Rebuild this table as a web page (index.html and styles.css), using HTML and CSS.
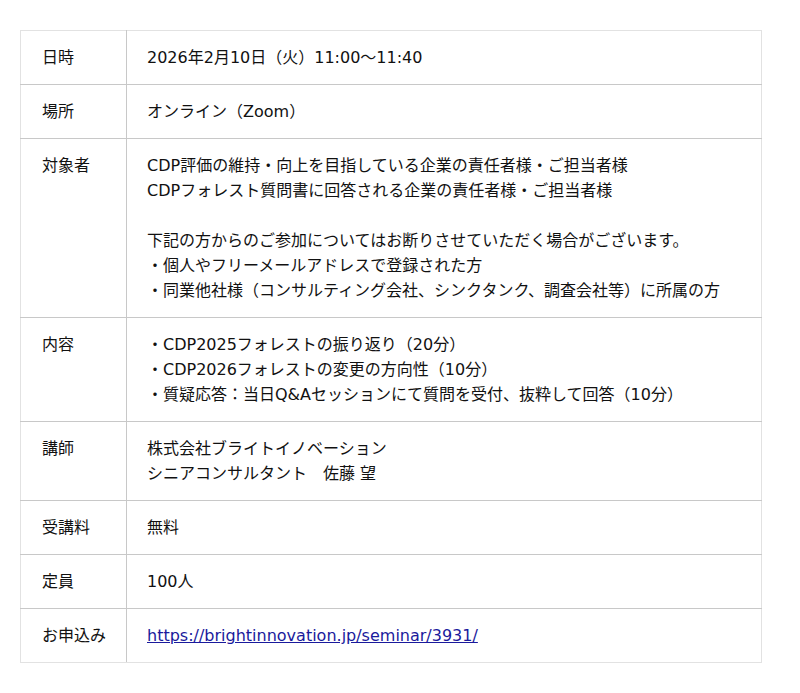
FILE: index.html
```html
<!DOCTYPE html>
<html lang="ja">
<head>
<meta charset="utf-8">
<link rel="stylesheet" href="styles.css">
</head>
<body>
<table class="info">
  <tr><th>日時</th><td>2026年2月10日（火）11:00〜11:40</td></tr>
  <tr><th>場所</th><td>オンライン（Zoom）</td></tr>
  <tr><th>対象者</th><td>CDP評価の維持・向上を目指している企業の責任者様・ご担当者様<br>CDPフォレスト質問書に回答される企業の責任者様・ご担当者様<br><br>下記の方からのご参加についてはお断りさせていただく場合がございます。<br>・個人やフリーメールアドレスで登録された方<br>・同業他社様（コンサルティング会社、シンクタンク、調査会社等）に所属の方</td></tr>
  <tr><th>内容</th><td>・CDP2025フォレストの振り返り（20分）<br>・CDP2026フォレストの変更の方向性（10分）<br>・質疑応答：当日Q&amp;Aセッションにて質問を受付、抜粋して回答（10分）</td></tr>
  <tr><th>講師</th><td>株式会社ブライトイノベーション<br>シニアコンサルタント　佐藤 望</td></tr>
  <tr><th>受講料</th><td>無料</td></tr>
  <tr><th>定員</th><td>100人</td></tr>
  <tr><th>お申込み</th><td><a href="https://brightinnovation.jp/seminar/3931/">https://brightinnovation.jp/seminar/3931/</a></td></tr>
</table>
</body>
</html>
```
FILE: styles.css
```css
html, body {
  margin: 0;
  padding: 0;
  background: #fff;
}
body {
  padding: 30px 20px;
  font-family: "DejaVu Sans", "Noto Sans CJK JP", sans-serif;
  font-size: 16px;
  line-height: 25px;
  color: #111;
}
.info {
  width: 742px;
  border-collapse: collapse;
  border: 1px solid #e2e2e2;
}
.info th,
.info td {
  border: 1px solid #c8c8c8;
  padding: 14px 20px;
  text-align: left;
  vertical-align: top;
  font-weight: normal;
}
.info th {
  width: 64px;
  padding-left: 21px;
}
.info tr:first-child th,
.info tr:first-child td { border-top-color: #e2e2e2; }
.info tr:last-child th,
.info tr:last-child td { border-bottom-color: #e2e2e2; }
.info th { border-left-color: #e2e2e2; }
.info td { border-right-color: #e2e2e2; }
.info a {
  color: #1a1a9c;
}
```
